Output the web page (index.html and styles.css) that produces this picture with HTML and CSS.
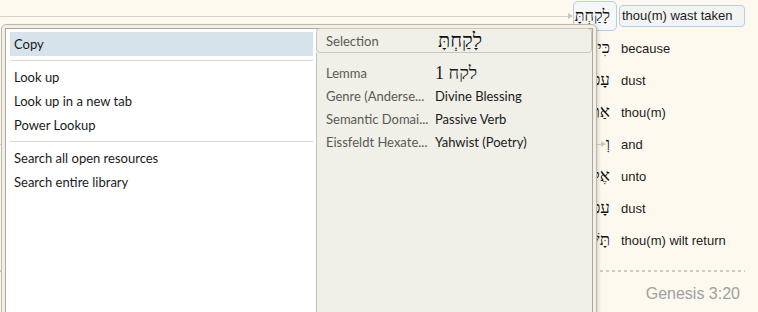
FILE: index.html
```html
<!DOCTYPE html>
<html lang="en">
<head>
    <meta charset="UTF-8">
    <title>Interlinear</title>
    <link rel="stylesheet" href="styles.css">
</head>
<body>
    <div class="page">
        <div class="words">
            <div class="row">
                <div class="heb-cell">
                    <span class="link"></span>
                    <span class="heb heb-box" dir="rtl">לָקַחְתָּ</span>
                </div>
                <div class="gloss"><span class="gloss-box">thou(m) wast taken</span></div>
            </div>
            <div class="row">
                <div class="heb-cell"><span class="heb" dir="rtl">כִּי</span></div>
                <div class="gloss">because</div>
            </div>
            <div class="row">
                <div class="heb-cell"><span class="heb" dir="rtl">עָפָר</span></div>
                <div class="gloss">dust</div>
            </div>
            <div class="row">
                <div class="heb-cell"><span class="heb" dir="rtl">אַתָּה</span></div>
                <div class="gloss">thou(m)</div>
            </div>
            <div class="row">
                <div class="heb-cell">
                    <span class="link"></span>
                    <span class="heb" dir="rtl">וְ</span>
                </div>
                <div class="gloss">and</div>
            </div>
            <div class="row">
                <div class="heb-cell"><span class="heb" dir="rtl">אֶל</span></div>
                <div class="gloss">unto</div>
            </div>
            <div class="row">
                <div class="heb-cell"><span class="heb" dir="rtl">עָפָר</span></div>
                <div class="gloss">dust</div>
            </div>
            <div class="row">
                <div class="heb-cell"><span class="heb" dir="rtl">תָּשׁוּב</span></div>
                <div class="gloss">thou(m) wilt return</div>
            </div>
        </div>
        <div class="dots"></div>
        <div class="verse-ref">Genesis 3:20</div>
    </div>

    <!-- context menu over the interlinear -->
    <div class="popup">
        <div class="popup-inner">
            <div class="menu">
                <div class="item active">Copy</div>
                <div class="sep"></div>
                <div class="item">Look up</div>
                <div class="item">Look up in a new tab</div>
                <div class="item">Power Lookup</div>
                <div class="sep"></div>
                <div class="item">Search all open resources</div>
                <div class="item">Search entire library</div>
            </div>
            <div class="info">
                <div class="sel-head">
                    <span class="label">Selection</span>
                    <span class="sel-heb" dir="rtl">לָקַחְתָּ</span>
                </div>
                <div class="sel-body">
                    <div class="info-row">
                        <span class="label">Lemma</span>
                        <span class="value lemma" dir="rtl">לקח 1</span>
                    </div>
                    <div class="info-row">
                        <span class="label">Genre (Anderse...</span>
                        <span class="value">Divine Blessing</span>
                    </div>
                    <div class="info-row">
                        <span class="label">Semantic Domai...</span>
                        <span class="value">Passive Verb</span>
                    </div>
                    <div class="info-row">
                        <span class="label">Eissfeldt Hexate...</span>
                        <span class="value">Yahwist (Poetry)</span>
                    </div>
                </div>
            </div>
        </div>
    </div>
</body>
</html>
```

FILE: styles.css
```css
* {
    margin: 0;
    padding: 0;
    box-sizing: border-box;
}
body {
    background: #fdf9ee;
    color: #1c1c1c;
    font-family: 'Liberation Sans', Arial, sans-serif;
    font-size: 13px;
    width: 758px;
    height: 312px;
    overflow: hidden;
    position: relative;
}
.page {
    padding-right: 13px;
}
.row {
    display: grid;
    grid-template-columns: 617px 1fr;
    height: 32px;
    align-items: center;
}
.heb-cell {
    display: flex;
    align-items: center;
    justify-content: flex-end;
    height: 100%;
}
.link {
    flex: 1;
    height: 1px;
    background: #d4d2cc;
    position: relative;
    margin-right: 1px;
}
.link::after {
    content: "";
    position: absolute;
    right: -1px;
    top: -3px;
    border-left: 5px solid #c9c7c1;
    border-top: 3.5px solid transparent;
    border-bottom: 3.5px solid transparent;
}
.heb {
    font-family: 'Liberation Serif', 'DejaVu Serif', serif;
    font-size: 17px;
    color: #111;
    padding-right: 7px;
}
.heb-box {
    height: 30px;
    display: flex;
    align-items: center;
    padding: 0 6px 0 1px;
    font-size: 16px;
    border: 1px solid #b3cfea;
    border-radius: 5px;
    background: #f6f8f7;
}
.gloss {
    padding-left: 4px;
    white-space: nowrap;
}
.gloss-box {
    display: block;
    margin-left: -2px;
    height: 22px;
    line-height: 20px;
    padding-left: 2px;
    border: 1px solid #b6cfe8;
    border-radius: 4px;
    background: #f2f3f3;
}
.dots {
    margin-top: 14px;
    height: 2px;
    background: repeating-linear-gradient(90deg, #cdccc8 0 3px, transparent 3px 6px);
}
.verse-ref {
    margin-top: 12px;
    text-align: right;
    padding-right: 5px;
    font-size: 16px;
    line-height: 20px;
    color: #a0a0a0;
}

.popup {
    position: absolute;
    left: 1px;
    top: 24px;
    width: 596px;
    height: 300px;
    padding: 3px 3px 0 3px;
    background: #f1efe6;
    border: 1px solid #bcb8ac;
    border-radius: 5px;
    box-shadow: 2px 1px 3px rgba(0, 0, 0, 0.12);
    font-family: Lato, 'Noto Sans', sans-serif;
    font-size: 13px;
}
.popup-inner {
    display: flex;
    height: 100%;
    border: 1px solid #aaa79c;
    border-bottom: none;
    background: white;
}
.menu {
    width: 310px;
    padding: 3px 3px 0 4px;
}
.item {
    height: 24px;
    line-height: 24px;
    padding-left: 4px;
    color: #1a1a1a;
}
.item.active {
    background: #d6e3ea;
}
.sep {
    height: 1px;
    background: #dcdad0;
    margin: 4px 0 4px;
}
.info {
    flex: 1;
    display: flex;
    flex-direction: column;
    background: #f0efe8;
}
.sel-head {
    height: 25px;
    display: flex;
    align-items: center;
    padding-left: 9px;
    border: 1px solid #cac8be;
    border-radius: 4px;
    margin-top: -1px;
}
.sel-body {
    flex: 1;
    border-left: 1px solid #c4c1b6;
    padding: 8px 0 0 9px;
}
.info-row {
    display: flex;
    height: 23px;
    align-items: center;
}
.label {
    width: 109px;
    color: #5a5a55;
    white-space: nowrap;
}
.value {
    color: #1a1a1a;
}
.sel-heb {
    margin-left: 3px;
    font-family: 'Liberation Serif', 'DejaVu Serif', serif;
    font-size: 20px;
    color: #111;
}
.lemma {
    font-family: 'Liberation Serif', 'DejaVu Serif', serif;
    font-size: 18px;
    line-height: 20px;
}
```
